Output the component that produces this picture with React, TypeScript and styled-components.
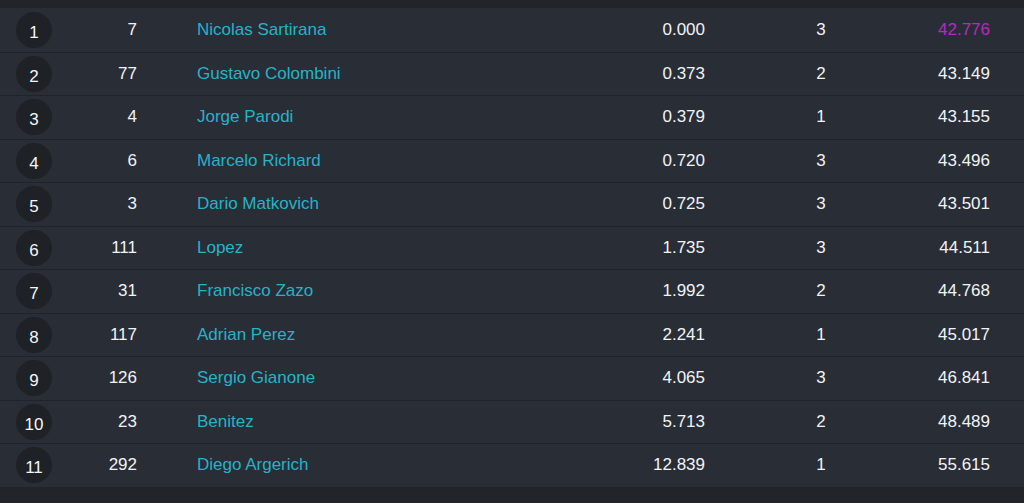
import * as React from "react";
import styled, { createGlobalStyle } from "styled-components";

const GlobalStyle = createGlobalStyle`
  html, body {
    margin: 0;
    padding: 0;
    background: #212429;
  }
  body {
    font-family: "Liberation Sans", Arial, sans-serif;
  }
`;

const Page = styled.div`
  width: 1024px;
  height: 503px;
  background: #212429;
  padding-top: 8px;
  box-sizing: border-box;
  overflow: hidden;
`;

const Table = styled.div`
  display: flex;
  flex-direction: column;
  background: #292d35;
`;

const Row = styled.div`
  display: grid;
  grid-template-columns: 36px 85px 368px 200px 232px 53px;
  align-items: center;
  height: 43.5px;
  padding: 0 34px 0 16px;
  box-sizing: border-box;
  border-top: 1px solid #20232a;
  font-size: 17px;
  color: #f1f3f5;
  &:first-child {
    border-top: none;
  }
`;

const Position = styled.div`
  width: 36px;
  height: 36px;
  border-radius: 50%;
  background: #1e2126;
  display: flex;
  align-items: center;
  justify-content: center;
  padding-top: 6px;
  box-sizing: border-box;
  font-size: 17px;
  color: #f4f6f8;
`;

const Number = styled.div`
  text-align: right;
`;

const Driver = styled.div`
  padding-left: 60px;
  color: #27b2ca;
  white-space: nowrap;
`;

const Gap = styled.div`
  text-align: right;
`;

const Laps = styled.div`
  text-align: center;
`;

const Time = styled.div<{ $best?: boolean }>`
  text-align: right;
  white-space: nowrap;
  color: ${(p) => (p.$best ? "#b52ac0" : "#f1f3f5")};
`;

interface Result {
  num: number;
  name: string;
  gap: string;
  laps: number;
  time: string;
}

const results: Result[] = [
  { num: 7, name: "Nicolas Sartirana", gap: "0.000", laps: 3, time: "42.776" },
  { num: 77, name: "Gustavo Colombini", gap: "0.373", laps: 2, time: "43.149" },
  { num: 4, name: "Jorge Parodi", gap: "0.379", laps: 1, time: "43.155" },
  { num: 6, name: "Marcelo Richard", gap: "0.720", laps: 3, time: "43.496" },
  { num: 3, name: "Dario Matkovich", gap: "0.725", laps: 3, time: "43.501" },
  { num: 111, name: "Lopez", gap: "1.735", laps: 3, time: "44.511" },
  { num: 31, name: "Francisco Zazo", gap: "1.992", laps: 2, time: "44.768" },
  { num: 117, name: "Adrian Perez", gap: "2.241", laps: 1, time: "45.017" },
  { num: 126, name: "Sergio Gianone", gap: "4.065", laps: 3, time: "46.841" },
  { num: 23, name: "Benitez", gap: "5.713", laps: 2, time: "48.489" },
  { num: 292, name: "Diego Argerich", gap: "12.839", laps: 1, time: "55.615" },
];

export default function App() {
  return (
    <Page>
      <GlobalStyle />
      <Table>
        {results.map((r, i) => (
          <Row key={r.num}>
            <Position>{i + 1}</Position>
            <Number>{r.num}</Number>
            <Driver>{r.name}</Driver>
            <Gap>{r.gap}</Gap>
            <Laps>{r.laps}</Laps>
            <Time $best={i === 0}>{r.time}</Time>
          </Row>
        ))}
      </Table>
    </Page>
  );
}
